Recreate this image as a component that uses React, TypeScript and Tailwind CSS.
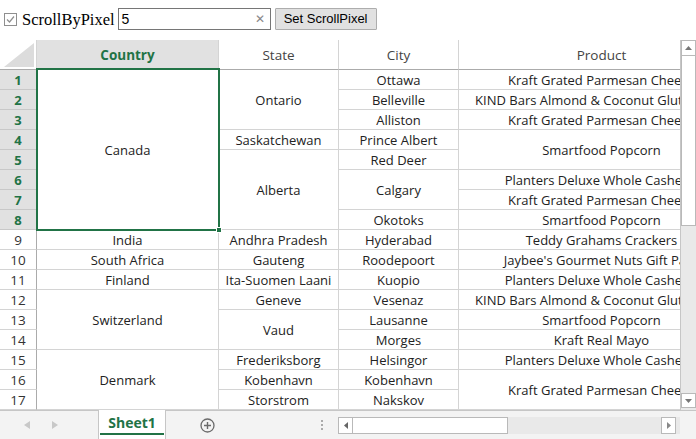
import React from "react";

type Cell = { t: string; n?: number };

const country: Cell[] = [
  { t: "Canada", n: 8 },
  { t: "India" },
  { t: "South Africa" },
  { t: "Finland" },
  { t: "Switzerland", n: 3 },
  { t: "Denmark", n: 3 },
];
const state: Cell[] = [
  { t: "Ontario", n: 3 },
  { t: "Saskatchewan" },
  { t: "Alberta", n: 4 },
  { t: "Andhra Pradesh" },
  { t: "Gauteng" },
  { t: "Ita-Suomen Laani" },
  { t: "Geneve" },
  { t: "Vaud", n: 2 },
  { t: "Frederiksborg" },
  { t: "Kobenhavn" },
  { t: "Storstrom" },
];
const city: Cell[] = [
  { t: "Ottawa" },
  { t: "Belleville" },
  { t: "Alliston" },
  { t: "Prince Albert" },
  { t: "Red Deer" },
  { t: "Calgary", n: 2 },
  { t: "Okotoks" },
  { t: "Hyderabad" },
  { t: "Roodepoort" },
  { t: "Kuopio" },
  { t: "Vesenaz" },
  { t: "Lausanne" },
  { t: "Morges" },
  { t: "Helsingor" },
  { t: "Kobenhavn" },
  { t: "Nakskov" },
];
const KP = "Kraft Grated Parmesan Cheese";
const KB = "KIND Bars Almond & Coconut Gluten Free";
const PL = "Planters Deluxe Whole Cashews";
const SP = "Smartfood Popcorn";
const product: Cell[] = [
  { t: KP },
  { t: KB },
  { t: KP },
  { t: SP, n: 2 },
  { t: PL },
  { t: KP },
  { t: SP },
  { t: "Teddy Grahams Crackers" },
  { t: "Jaybee's Gourmet Nuts Gift Pack" },
  { t: PL },
  { t: KB },
  { t: SP },
  { t: "Kraft Real Mayo" },
  { t: PL },
  { t: KP, n: 2 },
];

const rows = Array.from({ length: 17 }, (_, i) => i + 1);

function Column({
  title,
  cells,
  width,
  selected,
}: {
  title: string;
  cells: Cell[];
  width: string;
  selected?: boolean;
}) {
  return (
    <div className={`flex flex-col shrink-0 ${width}`}>
      <div
        className={
          selected
            ? "h-[30px] shrink-0 pt-[2px] flex items-center justify-center bg-[#e1e1e1] border-r border-r-[#d4d4d4] border-b border-b-[#ababab] text-[#217346] font-bold text-[13.5px]"
            : "h-[30px] shrink-0 pt-[2px] flex items-center justify-center bg-white border-r border-r-[#d4d4d4] border-b border-b-[#ababab] text-[#444] text-[13.5px]"
        }
      >
        {title}
      </div>
      {cells.map((c, i) => (
        <div
          key={i}
          className="shrink-0 pt-[2px] flex items-center justify-center border-r border-b border-[#d4d4d4] overflow-hidden whitespace-nowrap text-[13px] text-[#222]"
          style={{ height: (c.n ?? 1) * 20 }}
        >
          {c.t}
        </div>
      ))}
    </div>
  );
}

export default function App() {
  return (
    <div className="w-[696px] h-[439px] bg-white overflow-hidden flex flex-col font-['Open_Sans',sans-serif]">
      {/* toolbar */}
      <div className="h-[40px] shrink-0 flex items-start pt-[8px] pl-[4px]">
        <svg width="13" height="13" viewBox="0 0 13 13" className="mt-[5px]">
          <rect x="0.5" y="0.5" width="12" height="12" fill="#fff" stroke="#8f8f8f" />
          <path d="M3 6.5 L5.5 9 L10 3.5" fill="none" stroke="#8f8f8f" strokeWidth="1.2" />
        </svg>
        <span className="ml-[5px] font-['Liberation_Serif',serif] text-[16.5px] leading-[23px] text-black">
          ScrollByPixel
        </span>
        <div className="ml-[3px] w-[153px] h-[22px] border border-[#767676] flex items-center bg-white">
          <span className="pl-[3px] font-['Liberation_Sans',sans-serif] text-[14px] text-black flex-1">5</span>
          <span className="pr-[5px] text-[12px] text-[#888] font-['Liberation_Sans',sans-serif]">✕</span>
        </div>
        <button className="ml-[4px] w-[102px] h-[22px] border border-[#adadad] bg-[#e1e1e1] rounded-[1px] font-['Liberation_Sans',sans-serif] text-[13px] text-black flex items-center justify-center">
          Set ScrollPixel
        </button>
      </div>

      {/* sheet area */}
      <div className="h-[370px] shrink-0 flex">
        <div className="relative w-[680px] overflow-hidden flex">
          {/* row headers */}
          <div className="w-[37px] shrink-0 flex flex-col">
            <div className="h-[30px] shrink-0 relative bg-white border-r border-b border-[#ababab] border-r-[#d4d4d4]">
              <svg width="30" height="24" className="absolute right-[2px] bottom-[2px]" viewBox="0 0 30 24">
                <polygon points="30,0 30,24 0,24" fill="#dcdcdc" />
              </svg>
            </div>
            {rows.map((r) => (
              <div
                key={r}
                className={
                  r <= 8
                    ? "h-[20px] shrink-0 pt-[2px] flex items-center justify-center bg-[#e1e1e1] border-b border-r border-[#c8c8c8] border-r-[#ababab] text-[#217346] font-bold text-[13px]"
                    : "h-[20px] shrink-0 pt-[2px] flex items-center justify-center bg-white border-b border-r border-[#d4d4d4] border-r-[#ababab] text-[#333] text-[13.5px]"
                }
              >
                {r}
              </div>
            ))}
          </div>
          <Column title="Country" cells={country} width="w-[182px]" selected />
          <Column title="State" cells={state} width="w-[120px]" />
          <Column title="City" cells={city} width="w-[120px]" />
          <Column title="Product" cells={product} width="w-[286px]" />

          {/* selection */}
          <div className="absolute left-[36px] top-[28px] w-[184px] h-[163px] border-2 border-[#217346] pointer-events-none" />
          <div className="absolute left-[216px] top-[187px] w-[6px] h-[6px] bg-[#217346] border border-white" />
        </div>

        {/* vertical scrollbar */}
        <div className="w-[16px] shrink-0 flex flex-col bg-[#e9e9e9] border-l border-[#c6c6c6]">
          <div className="h-[16px] shrink-0 bg-white border border-[#b9b9b9] flex items-center justify-center">
            <svg width="7" height="4" viewBox="0 0 7 4">
              <polygon points="0,4 7,4 3.5,0" fill="#777" />
            </svg>
          </div>
          <div className="h-[170px] shrink-0 bg-white border border-t-0 border-[#b9b9b9]" />
          <div className="flex-1" />
          <div className="h-[15px] shrink-0 bg-white border border-[#b9b9b9] flex items-center justify-center mb-[2px]">
            <svg width="7" height="4" viewBox="0 0 7 4">
              <polygon points="0,0 7,0 3.5,4" fill="#777" />
            </svg>
          </div>
        </div>
      </div>

      {/* bottom bar */}
      <div className="flex-1 flex items-stretch bg-[#f3f3f3] border-t border-[#c6c6c6]">
        <div className="w-[98px] shrink-0 flex items-center">
          <svg width="6" height="8" viewBox="0 0 6 8" className="ml-[24px]">
            <polygon points="6,0 6,8 0,4" fill="#c8c8c8" />
          </svg>
          <svg width="6" height="8" viewBox="0 0 6 8" className="ml-[22px]">
            <polygon points="0,0 0,8 6,4" fill="#c8c8c8" />
          </svg>
        </div>
        <div className="w-[68px] shrink-0 -mt-px bg-white border-x border-[#c6c6c6] flex flex-col">
          <div className="flex-1 flex items-center justify-center pt-[2px] text-[#217346] font-bold text-[14px]">Sheet1</div>
          <div className="h-[2px] bg-[#217346] mx-[1px] mb-[4px]" />
        </div>
        <div className="w-[84px] shrink-0 flex items-center pl-[34px]">
          <svg width="15" height="15" viewBox="0 0 15 15">
            <circle cx="7.5" cy="7.5" r="6.5" fill="none" stroke="#6b6b6b" strokeWidth="1.3" />
            <path d="M7.5 4 V11 M4 7.5 H11" stroke="#6b6b6b" strokeWidth="1.4" />
          </svg>
        </div>
        <div className="w-[88px] shrink-0 flex items-center justify-end pr-[15px]">
          <div className="flex flex-col gap-[2px]">
            <div className="w-[2px] h-[2px] bg-[#aaa]" />
            <div className="w-[2px] h-[2px] bg-[#aaa]" />
            <div className="w-[2px] h-[2px] bg-[#aaa]" />
          </div>
        </div>
        <div className="w-[342px] shrink-0 flex items-center">
          <div className="w-full h-[17px] flex bg-[#e9e9e9]">
            <div className="w-[15px] h-full bg-white border border-[#b9b9b9] flex items-center justify-center">
              <svg width="4" height="7" viewBox="0 0 4 7">
                <polygon points="4,0 4,7 0,3.5" fill="#666" />
              </svg>
            </div>
            <div className="w-[155px] h-full bg-white border border-l-0 border-[#b9b9b9]" />
            <div className="flex-1" />
            <div className="w-[15px] h-full bg-white border border-[#b9b9b9] flex items-center justify-center mr-[4px]">
              <svg width="4" height="7" viewBox="0 0 4 7">
                <polygon points="0,0 0,7 4,3.5" fill="#888" />
              </svg>
            </div>
          </div>
        </div>
      </div>
    </div>
  );
}
